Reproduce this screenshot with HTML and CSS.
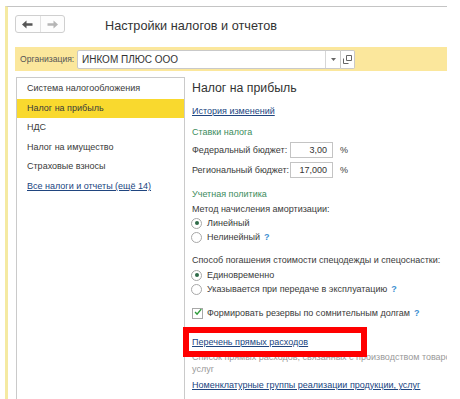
FILE: index.html
```html
<!DOCTYPE html>
<html lang="ru">
<head>
    <meta charset="UTF-8">
    <title>Настройки налогов и отчетов</title>
    <link rel="stylesheet" href="styles.css">
</head>
<body>
<div class="window">
    <div class="header">
        <div class="nav-buttons">
            <span class="nav-btn back">
                <svg width="11" height="9" viewBox="0 0 11 9"><path d="M0 4.5 L4.5 0.5 L4.5 3.3 L10.5 3.3 L10.5 5.7 L4.5 5.7 L4.5 8.5 Z" fill="#555"/></svg>
            </span>
            <span class="nav-btn fwd">
                <svg width="11" height="9" viewBox="0 0 11 9"><path d="M11 4.5 L6.5 0.5 L6.5 3.3 L0.5 3.3 L0.5 5.7 L6.5 5.7 L6.5 8.5 Z" fill="#b5b5b5"/></svg>
            </span>
        </div>
        <h1 class="title">Настройки налогов и отчетов</h1>
    </div>

    <div class="org-band">
        <span class="org-label">Организация:</span>
        <div class="org-input">
            <span class="org-value">ИНКОМ ПЛЮС ООО</span>
            <span class="drop-btn">
                <svg width="5" height="3" viewBox="0 0 5 3"><path d="M0 0 L5 0 L2.5 3 Z" fill="#666"/></svg>
            </span>
        </div>
        <span class="open-btn">
            <svg width="9" height="9" viewBox="0 0 9 9"><path d="M3.5 0.5 H8.5 V5.5 H3.5 Z M0.5 3.5 V8.5 H5.5" fill="none" stroke="#666" stroke-width="1"/></svg>
        </span>
    </div>

    <div class="main">
        <ul class="sections">
            <li>Система налогообложения</li>
            <li class="active">Налог на прибыль</li>
            <li>НДС</li>
            <li>Налог на имущество</li>
            <li>Страховые взносы</li>
            <li><a class="link">Все налоги и отчеты (ещё 14)</a></li>
        </ul>

        <div class="content">
            <h2 class="heading">Налог на прибыль</h2>
            <div class="row r-history"><a class="link">История изменений</a></div>

            <div class="row group r-rates">Ставки налога</div>
            <div class="rate-row">
                <span class="rate-label">Федеральный бюджет:</span>
                <span class="num-input">3,00</span>
                <span class="pct">%</span>
            </div>
            <div class="rate-row">
                <span class="rate-label">Региональный бюджет:</span>
                <span class="num-input">17,000</span>
                <span class="pct">%</span>
            </div>

            <div class="row group r-policy">Учетная политика</div>
            <div class="row r-method">Метод начисления амортизации:</div>
            <div class="row option r-lin"><span class="radio checked"></span>Линейный</div>
            <div class="row option r-nonlin"><span class="radio"></span>Нелинейный <span class="help">?</span></div>

            <div class="row r-way">Способ погашения стоимости спецодежды и спецоснастки:</div>
            <div class="row option r-once"><span class="radio checked"></span>Единовременно</div>
            <div class="row option r-transfer"><span class="radio"></span>Указывается при передаче в эксплуатацию <span class="help">?</span></div>

            <div class="row option r-reserve">
                <span class="checkbox">
                    <svg width="11" height="10" viewBox="0 0 11 10"><path d="M1.5 5 L4.2 8 L10 1" fill="none" stroke="#2e9b3a" stroke-width="2"/></svg>
                </span>
                Формировать резервы по сомнительным долгам <span class="help">?</span>
            </div>

            <div class="row r-direct"><a class="link">Перечень прямых расходов</a></div>
            <p class="note">Список прямых расходов, связанных с производством товаров, работ,<br>услуг</p>
            <div class="row r-groups"><a class="link">Номенклатурные группы реализации продукции, услуг</a></div>
        </div>
    </div>

    <div class="highlight"></div>
</div>
</body>
</html>
```

FILE: styles.css
```css
body {
    margin: 0;
    background: #ffffff;
    font-family: "Liberation Sans", Arial, sans-serif;
    font-size: 9px;
    color: #3a3a3a;
}

.window {
    position: relative;
    width: 439px;
    height: 392px;
    margin: 6px 0 0 5px;
    border-top: 1px solid #c4c4c4;
    border-left: 3px solid #f5eaa2;
    overflow: hidden;
}

/* header with back / forward and title */
.header {
    display: flex;
    align-items: center;
    height: 40px;
    padding-left: 7px;
    box-sizing: border-box;
}

.nav-buttons {
    display: flex;
    width: 50px;
    height: 18px;
    margin-top: -6px;
    border: 1px solid #cfcfcf;
    border-radius: 3px;
    box-sizing: border-box;
    background: #fdfdfd;
}

.nav-btn {
    flex: 1;
    display: flex;
    align-items: center;
    justify-content: center;
}

.nav-btn.back {
    border-right: 1px solid #e2e2e2;
}

.title {
    margin: -2px 0 0 40px;
    font-size: 12.7px;
    font-weight: normal;
    color: #333;
}

/* organisation band */
.org-band {
    display: flex;
    align-items: center;
    height: 24px;
    margin-left: 7px;
    padding-left: 5px;
    background: #fbe79c;
}

.org-label {
    width: 57px;
    font-size: 8.6px;
    color: #555;
}

.org-input {
    display: flex;
    align-items: center;
    width: 264px;
    height: 19px;
    border: 1px solid #c9c9c9;
    border-radius: 2px 0 0 2px;
    background: #fff;
    box-sizing: border-box;
}

.org-value {
    flex: 1;
    padding-left: 4px;
    font-size: 10px;
    color: #333;
}

.drop-btn {
    display: flex;
    align-items: center;
    justify-content: center;
    width: 14px;
    height: 100%;
    border-left: 1px solid #d6d6d6;
}

.open-btn {
    display: flex;
    align-items: center;
    justify-content: center;
    width: 14px;
    height: 19px;
    border: 1px solid #c9c9c9;
    border-left: none;
    border-radius: 0 2px 2px 0;
    background: #fff;
    box-sizing: border-box;
}

/* main area */
.main {
    display: flex;
    padding: 6px 0 0 8px;
    height: 100%;
}

.sections {
    flex-shrink: 0;
    width: 169px;
    height: 100%;
    margin: 0;
    padding: 1px 0 0;
    list-style: none;
    border: 1px solid #cacaca;
    border-bottom: none;
    box-sizing: border-box;
}

.sections li {
    height: 19.6px;
    line-height: 19.6px;
    padding-left: 10px;
    white-space: nowrap;
}

.sections li.active {
    background: #f9d92e;
}

.link {
    color: #20457f;
    text-decoration: underline;
}

.content {
    flex-shrink: 0;
    padding: 1px 0 0 7px;
    white-space: nowrap;
}

.heading {
    margin: 0;
    height: 20px;
    line-height: 20px;
    font-size: 12.3px;
    font-weight: normal;
    color: #333;
}

.row {
    height: 15px;
    line-height: 15px;
}

.group {
    color: #3c8c5c;
}

.r-history { margin-top: 6px; }
.r-rates { margin-top: 6px; }
.r-policy { margin-top: 7px; }
.r-method { height: 14px; line-height: 14px; }
.r-lin { height: 14px; line-height: 14px; }
.r-way { margin-top: 8px; }
.r-once { height: 14px; line-height: 14px; }
.r-reserve { margin-top: 8px; height: 16px; line-height: 16px; }
.r-direct { margin-top: 14px; }
.r-groups { margin-top: 3px; }

.rate-row {
    display: flex;
    align-items: center;
    height: 20px;
}

.rate-label {
    width: 98px;
}

.num-input {
    width: 43px;
    height: 16px;
    line-height: 15px;
    padding-right: 5px;
    border: 1px solid #c4c4c4;
    text-align: right;
    box-sizing: border-box;
    color: #333;
}

.pct {
    margin-left: 7px;
}

.option {
    display: flex;
    align-items: center;
}

.radio {
    width: 11px;
    height: 11px;
    margin: 0 5px 0 -1px;
    border: 1px solid #a8a8a8;
    border-radius: 50%;
    box-sizing: border-box;
    display: flex;
    align-items: center;
    justify-content: center;
    background: #fff;
}

.radio.checked::after {
    content: "";
    width: 4px;
    height: 4px;
    border-radius: 50%;
    background: #2f6b48;
}

.checkbox {
    display: flex;
    align-items: center;
    justify-content: center;
    width: 11px;
    height: 11px;
    margin-right: 4px;
    border: 1px solid #a8a8a8;
    box-sizing: border-box;
}

.checkbox svg {
    margin-top: -2px;
    margin-left: 1px;
}

.help {
    margin-left: 4px;
    color: #3d8fd1;
    font-weight: bold;
}

.note {
    margin: 1px 0 0;
    line-height: 12px;
    color: #9a9a9a;
}

/* annotation frame */
.highlight {
    position: absolute;
    left: 175px;
    top: 320px;
    width: 184px;
    height: 30px;
    border: 6px solid #ff0000;
    box-sizing: border-box;
}
```
